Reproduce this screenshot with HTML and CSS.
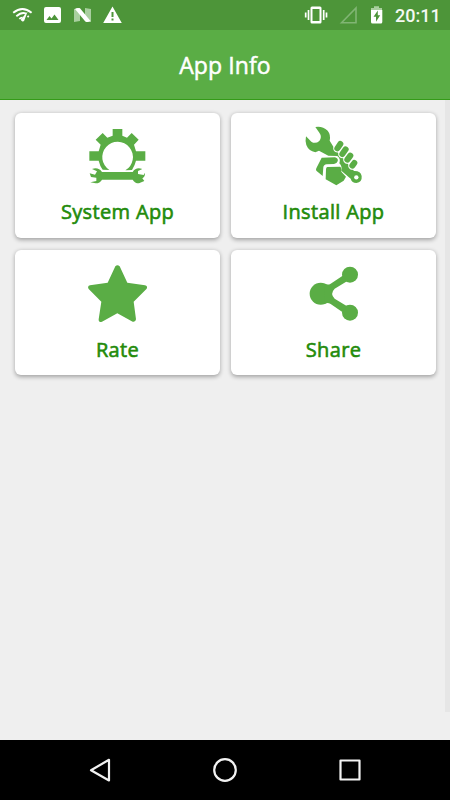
FILE: index.html
```html
<!DOCTYPE html>
<html lang="en">
<head>
    <meta charset="UTF-8">
    <title>App Info</title>
    <meta name="viewport" content="width=device-width, initial-scale=1.0">
    <link rel="stylesheet" href="styles.css">
</head>
<body>
    <div class="status-bar">
        <svg class="status-icons" viewBox="0 0 150 30" width="150" height="30">
            <g fill="none" stroke="#fff" stroke-width="1.9">
                <path d="M13.2 12.8Q22.5 5.2 31.6 12.8"/>
                <path d="M16.3 16.2Q22 11.6 26 13.6M27.5 16l1.3 1"/>
                <path d="M19.4 19Q21 17.4 22.5 17.7"/>
            </g>
            <path d="M27.7 11.3l-3.4 9.3a1.8 1.8 0 0 1-3.3-1.3z" fill="#fff"/>
            <path d="M46 7h13a2 2 0 0 1 2 2v12a2 2 0 0 1-2 2H46a2 2 0 0 1-2-2V9a2 2 0 0 1 2-2zM46.5 20h12l-4-5.5-3 4-2-2.5z" fill="#fff" fill-rule="evenodd"/>
            <path d="M74 9l6-1v13l-6 1zM85 8l6 1v13l-6-1z" fill="#a9cf9f"/>
            <path d="M75 9Q77 7.3 80 8.2L90.5 21Q88 22.8 85.3 21.5z" fill="#fff"/>
            <path d="M112.5 6.5L121.8 23h-18.6zM111.5 12v5h2v-5zM111.5 18.5v2h2v-2z" fill="#fff" fill-rule="evenodd"/>
        </svg>
        <div class="status-right">
            <svg viewBox="300 0 90 30" width="90" height="30">
                <path d="M312 6.5h8a1.5 1.5 0 0 1 1.5 1.5v14a1.5 1.5 0 0 1-1.5 1.5h-8a1.5 1.5 0 0 1-1.5-1.5V8a1.5 1.5 0 0 1 1.5-1.5zM312.5 9v12h7V9z" fill="#fff" fill-rule="evenodd"/>
                <path d="M308.5 10v10M305.7 12.5v5M323.7 10v10M326.5 12.5v5" stroke="#fff" stroke-width="1.7"/>
                <path d="M341.5 22.8L356 8v14.8z" fill="none" stroke="#81b574" stroke-width="1.6"/>
                <path d="M371 10V8h3V6.3h5V8h3v2z" fill="#a9cf9f"/>
                <path d="M371 10h11.3v12a1.5 1.5 0 0 1-1.5 1.5h-8.3a1.5 1.5 0 0 1-1.5-1.5zM377.8 10.5l-4.3 6.2h2.5v5l4.2-6.5h-2.4z" fill="#fff" fill-rule="evenodd"/>
            </svg>
            <span class="clock">20:11</span>
        </div>
    </div>
    <header class="app-bar">
        <h1>App Info</h1>
    </header>
    <main class="content">
        <div class="grid">
            <div class="card">
                <svg class="card-icon" viewBox="9 0 210 210">
                    <path d="M98 47V27h29v20l14 6 14-14 21 20-14 15 6 20h28v28h-28q-3 13-12 28l-20 1A46 46 0 1 0 88 150l-20-1q-8-10-12-27H28V94h28l6-20-15-15 21-20 14 14z"/>
                    <path d="M36 147Q55 140 66 156H158Q168 140 187 147L174 153V162L191 165 194 158Q197 169 187 175L193 183 177 190Q164 190 158 179H66Q60 190 47 190L31 187 49 183V173L33 171 29 160 45 164 51 154z"/>
                </svg>
                <span class="card-label">System App</span>
            </div>
            <div class="card">
                <svg class="card-icon" viewBox="12 0 210 210">
                    <path d="M61 21Q82 17 98 32 108 44 104 62L116 82 177 153Q197 152 200 168 202 187 184 189 171 189 167 176L139 152Q142 138 133 130 138 116 127 108L100 107 72 92 61 97Q41 93 34 75 30 63 33 49L49 65Q61 73 73 63 82 50 73 38z"/>
                    <path class="finger-gap" d="M127 85l9-13M142 102l10-14M157 119l9-12M172 137l6-8"/>
                    <path class="fingers" d="M127 85l9-13M142 102l10-14M157 119l9-12M172 137l6-8"/>
                    <path d="M80 113l40-1q11 3 8 12-2 7-11 8l-22 1q-9 1-10 9l-2 26-19-16q-2-3 0-7z"/>
                    <path d="M97 141l38-1q5 2 4 15l14 15-7 12-22 14-32-18 1-30q0-6 4-7z"/>
                    <circle cx="184" cy="172" r="6.5" fill="#fff"/>
                </svg>
                <span class="card-label">Install App</span>
            </div>
            <div class="card">
                <svg class="card-icon" viewBox="9 -3 210 210">
                    <path d="M106 25Q112 18 119 25L142 74 195 82Q204 85 200 92L161 131 168 184Q167 193 158 191L112 166 66 191Q55 194 56 184L64 131 26 93Q21 85 30 82L83 74z"/>
                </svg>
                <span class="card-label">Rate</span>
            </div>
            <div class="card">
                <svg class="card-icon" viewBox="12 -3 210 210">
                    <circle cx="77" cy="107" r="33"/>
                    <circle cx="165" cy="50" r="24"/>
                    <circle cx="165" cy="164" r="24"/>
                    <path d="M90 78Q99 82 107 77L143 53 156 70 119 92Q104 107 119 122L155 144 142 162 107 138Q98 132 89 137z"/>
                </svg>
                <span class="card-label">Share</span>
            </div>
        </div>
        <div class="scrollbar"></div>
    </main>
    <nav class="nav-bar">
        <svg viewBox="0 0 450 60" width="450" height="60" fill="none" stroke="#f2f2f2" stroke-width="2.2" stroke-linejoin="round">
            <path d="M109 19.8v20.7L91 30.2z"/>
            <circle cx="225" cy="30" r="10.8"/>
            <rect x="340.5" y="20.5" width="19" height="19"/>
        </svg>
    </nav>
</body>
</html>
```
FILE: styles.css
```css
* {
    box-sizing: border-box;
}
body {
    margin: 0;
    height: 800px;
    display: flex;
    flex-direction: column;
    overflow: hidden;
    font-family: "Open Sans", "Noto Sans", sans-serif;
    background: #efefef;
}
svg {
    display: block;
}
.status-bar {
    height: 30px;
    display: flex;
    justify-content: space-between;
    background: #4d9539;
}
.status-right {
    display: flex;
    width: 150px;
}
.clock {
    padding-left: 5px;
    font-family: Roboto, sans-serif;
    font-size: 18px;
    font-weight: 500;
    line-height: 31px;
    color: #f4f9f2;
}
.app-bar {
    height: 70px;
    display: flex;
    align-items: center;
    justify-content: center;
    background: #5aad45;
    border-bottom: 1px solid #349b18;
}
.app-bar h1 {
    margin: 0;
    font-size: 23px;
    font-weight: 400;
    letter-spacing: 0.1px;
    line-height: 32px;
    color: #fff;
    -webkit-text-stroke: 0.5px #fff;
}
.content {
    flex: 1;
    display: flex;
    justify-content: space-between;
}
.grid {
    display: grid;
    grid-template-columns: 205px 205px;
    grid-auto-rows: 125px;
    align-content: start;
    gap: 12.5px 11px;
    padding: 12.5px 0 0 15px;
}
.card {
    display: flex;
    flex-direction: column;
    align-items: center;
    padding-top: 7px;
    background: #fff;
    border-radius: 6px;
    box-shadow: 0 1.5px 4px rgba(0, 0, 0, 0.32);
}
.card-icon {
    width: 70px;
    height: 70px;
    fill: #5aad45;
}
.finger-gap,
.fingers {
    stroke-linecap: round;
    stroke: #fff;
    stroke-width: 25;
}
.fingers {
    stroke: #5aad45;
    stroke-width: 18;
}
.card-label {
    margin-top: 8.5px;
    font-size: 20px;
    letter-spacing: 0.35px;
    line-height: 28px;
    color: #238b0b;
    -webkit-text-stroke: 0.6px #238b0b;
}
.scrollbar {
    width: 5px;
    height: 612px;
    background: #e6e6e6;
}
/* Android navigation keys */
.nav-bar {
    height: 60px;
    background: #000;
}
```
